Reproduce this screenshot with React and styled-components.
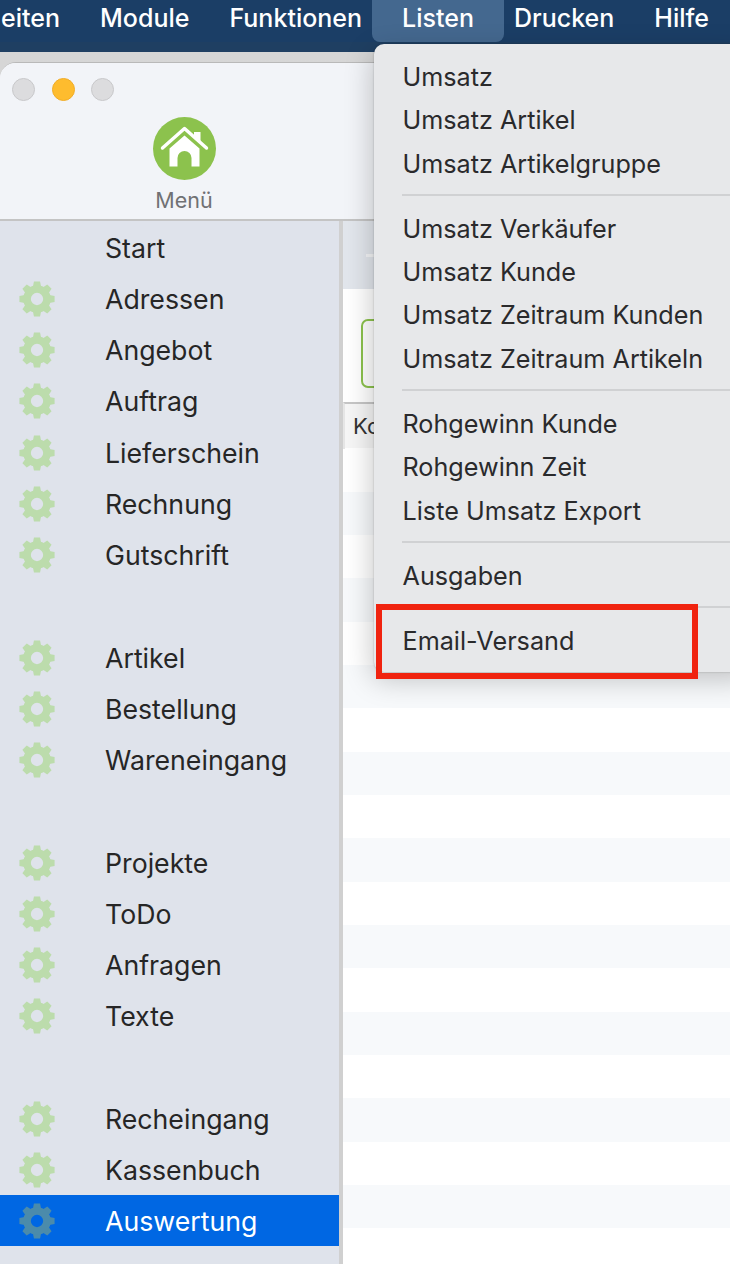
import React from 'react';
import styled, { createGlobalStyle } from 'styled-components';

const FONT = `Inter, "Noto Sans", "Liberation Sans", sans-serif`;

const sidebarItems = [
  { label: 'Start', noIcon: true },
  { label: 'Adressen' },
  { label: 'Angebot' },
  { label: 'Auftrag' },
  { label: 'Lieferschein' },
  { label: 'Rechnung' },
  { label: 'Gutschrift' },
  null,
  { label: 'Artikel' },
  { label: 'Bestellung' },
  { label: 'Wareneingang' },
  null,
  { label: 'Projekte' },
  { label: 'ToDo' },
  { label: 'Anfragen' },
  { label: 'Texte' },
  null,
  { label: 'Recheingang' },
  { label: 'Kassenbuch' },
  { label: 'Auswertung', active: true },
];

const menuGroups = [
  ['Umsatz', 'Umsatz Artikel', 'Umsatz Artikelgruppe'],
  ['Umsatz Verkäufer', 'Umsatz Kunde', 'Umsatz Zeitraum Kunden', 'Umsatz Zeitraum Artikeln'],
  ['Rohgewinn Kunde', 'Rohgewinn Zeit', 'Liste Umsatz Export'],
  ['Ausgaben'],
  ['Email-Versand'],
];

function Gear({ active }) {
  const teeth = [0, 45, 90, 135, 180, 225, 270, 315];
  return (
    <GearIcon viewBox="0 0 40 40" $active={active}>
      {teeth.map((a) => (
        <path key={a} d="M16.8 1.5h6.4l1.4 7h-9.2z" transform={`rotate(${a} 20 20)`} fill="currentColor" />
      ))}
      <circle cx="20" cy="20" r="10.5" fill="none" stroke="currentColor" strokeWidth="8" />
    </GearIcon>
  );
}

function HomeBadge() {
  return (
    <HomeIcon viewBox="0 0 63 63">
      <circle cx="31.5" cy="31.5" r="31.5" fill="#8cc24d" />
      <path d="M41 15h6.5v9.5L41 19z" fill="#fff" />
      <path d="M9.5 31 31.5 11.5 53.5 31" fill="none" stroke="#fff" strokeWidth="3.4" strokeLinecap="round" strokeLinejoin="round" />
      <path
        d="M31.5 18.5 46.5 31.5V49.5H38.5V41a7 7 0 0 0-14 0V49.5H16.5V31.5z"
        fill="#fff"
      />
    </HomeIcon>
  );
}

export default function App() {
  return (
    <>
      <GlobalStyle />
      <Screen>
        <MenuBar>
          <MenuTitle>eiten</MenuTitle>
          <MenuTitle>Module</MenuTitle>
          <MenuTitle>Funktionen</MenuTitle>
          <MenuTitle $open>Listen</MenuTitle>
          <MenuTitle>Drucken</MenuTitle>
          <MenuTitle>Hilfe</MenuTitle>
        </MenuBar>
        <Desktop>
          <Window>
            <Toolbar>
              <TrafficLights>
                <Light />
                <Light $color="#febc2e" />
                <Light />
              </TrafficLights>
              <ToolButton>
                <HomeBadge />
                <ToolLabel>Menü</ToolLabel>
              </ToolButton>
            </Toolbar>
            <Body>
              <Sidebar>
                {sidebarItems.map((item, i) =>
                  item ? (
                    <SideRow key={item.label} $active={item.active}>
                      <IconSlot>{!item.noIcon && <Gear active={item.active} />}</IconSlot>
                      {item.label}
                    </SideRow>
                  ) : (
                    <SideRow key={i} />
                  )
                )}
              </Sidebar>
              <Content>
                <TabStrip>
                  <TabDash />
                </TabStrip>
                <ActionArea>
                  <GreenButton />
                </ActionArea>
                <TableHead>Ko</TableHead>
                {Array.from({ length: 19 }).map((_, i) => (
                  <TableRow key={i} $striped={i % 2 === 1} />
                ))}
              </Content>
            </Body>
          </Window>
        </Desktop>
        <Dropdown>
          {menuGroups.map((group, g) => (
            <React.Fragment key={g}>
              {g > 0 && <Separator />}
              {group.map((label) => (
                <DropItem key={label}>{label}</DropItem>
              ))}
            </React.Fragment>
          ))}
        </Dropdown>
        <Highlight />
      </Screen>
    </>
  );
}

const GlobalStyle = createGlobalStyle`
  html, body {
    margin: 0;
    padding: 0;
    background: #fff;
  }
  body {
    font-family: ${FONT};
    overflow: hidden;
  }
`;

const Screen = styled.div`
  position: relative;
  display: flex;
  flex-direction: column;
  width: 730px;
  height: 1264px;
  overflow: hidden;
`;

const MenuBar = styled.div`
  display: flex;
  align-items: flex-start;
  flex-shrink: 0;
  height: 52px;
  padding-right: 1px;
  justify-content: flex-end;
  box-sizing: border-box;
  background: linear-gradient(to bottom, #1b3e66 0, #1b3e66 42px, #1f3f62 42px, #1f3f62 100%);
`;

const MenuTitle = styled.div`
  flex-shrink: 0;
  height: 42px;
  line-height: 36px;
  padding: 0 ${(p) => (p.$open ? '30px' : '20px')};
  margin: 0 ${(p) => (p.$open ? '-10px' : '0')};
  border-radius: 0 0 8px 8px;
  font-size: 25px;
  font-weight: 500;
  color: #fff;
  background: ${(p) => (p.$open ? '#44688f' : 'transparent')};
`;

const Desktop = styled.div`
  flex: 1;
  min-height: 0;
  display: flex;
  padding-top: 10px;
  background: linear-gradient(to bottom, #d6d6d6, #dcdcdc);
`;

const Window = styled.div`
  flex: 1;
  display: flex;
  flex-direction: column;
  border-top: 1px solid #b9b9b9;
  border-radius: 16px 0 0 0;
  overflow: hidden;
  background: #f2f4f8;
`;

const Toolbar = styled.div`
  position: relative;
  flex-shrink: 0;
  height: 158px;
  box-sizing: border-box;
  border-bottom: 2px solid #c4c4c4;
  display: flex;
  flex-direction: column;
  align-items: flex-start;
  background: #f2f4f8;
`;

const TrafficLights = styled.div`
  display: flex;
  gap: 16.5px;
  padding: 15px 0 0 12px;
`;

const Light = styled.span`
  width: 23px;
  height: 23px;
  box-sizing: border-box;
  border-radius: 50%;
  background: ${(p) => p.$color || '#dcdcde'};
  border: 1px solid ${(p) => (p.$color ? '#f0ac28' : '#c8c8ca')};
`;

const ToolButton = styled.div`
  display: flex;
  flex-direction: column;
  align-items: center;
  width: 120px;
  margin: 16px 0 0 124px;
`;

const HomeIcon = styled.svg`
  width: 63px;
  height: 63px;
  display: block;
`;

const ToolLabel = styled.span`
  margin-top: 8px;
  font-size: 21.5px;
  line-height: 24px;
  color: #707174;
`;

const Body = styled.div`
  flex: 1;
  min-height: 0;
  display: flex;
`;

const Sidebar = styled.div`
  flex-shrink: 0;
  width: 343px;
  box-sizing: border-box;
  background: #dfe3eb;
  border-right: 4px solid #d0d0d0;
`;

const SideRow = styled.div`
  display: flex;
  align-items: center;
  height: 51.25px;
  box-sizing: border-box;
  padding-top: 2px;
  font-size: 26.7px;
  color: ${(p) => (p.$active ? '#fff' : '#262626')};
  background: ${(p) => (p.$active ? '#0067e3' : 'transparent')};
`;

const IconSlot = styled.span`
  display: flex;
  justify-content: center;
  align-items: center;
  flex-shrink: 0;
  width: 74px;
  margin-right: 31px;
`;

const GearIcon = styled.svg`
  display: block;
  width: 38px;
  height: 38px;
  color: ${(p) => (p.$active ? '#4b8bab' : '#bcdcac')};
`;

const Content = styled.div`
  flex: 1;
  min-width: 0;
  background: #fff;
`;

const TabStrip = styled.div`
  display: flex;
  align-items: center;
  height: 68px;
  padding-left: 23px;
  background: #e2e6ec;
`;

const TabDash = styled.span`
  width: 8px;
  height: 3px;
  background: #f4f5f7;
`;

const ActionArea = styled.div`
  height: 113px;
  box-sizing: border-box;
  padding: 30px 0 0 18px;
  background: #fff;
`;

const GreenButton = styled.div`
  width: 120px;
  height: 69px;
  box-sizing: border-box;
  border: 2px solid #8cc24d;
  border-radius: 7px;
`;

const TableHead = styled.div`
  height: 46.5px;
  box-sizing: border-box;
  padding-left: 8px;
  line-height: 44px;
  font-size: 22px;
  color: #333;
  background: linear-gradient(to bottom, #f6f6f6 44px, #fff 44px);
  border-top: 2px solid #c6c6c6;
  border-left: 2px solid #e6e6e6;
`;

const TableRow = styled.div`
  height: 43.33px;
  background: ${(p) => (p.$striped ? '#f7f9fb' : '#fff')};
`;

const Dropdown = styled.div`
  position: absolute;
  top: 44px;
  left: 374px;
  width: 380px;
  height: 628px;
  box-sizing: border-box;
  padding: 12px 0 0 0;
  background: #e7e8ea;
  border-radius: 10px;
  box-shadow: 0 0 2px rgba(0, 0, 0, 0.25), -2px 8px 28px rgba(0, 0, 0, 0.22);
`;

const DropItem = styled.div`
  height: 43.3px;
  line-height: 42px;
  padding-left: 28.5px;
  font-size: 25.2px;
  color: #2a2a2c;
`;

const Separator = styled.div`
  height: 2px;
  margin: 8px 0 12px 28px;
  background: #d0d1d3;
`;

const Highlight = styled.div`
  position: absolute;
  top: 604px;
  left: 376px;
  width: 322px;
  height: 75px;
  box-sizing: border-box;
  border: 6px solid #f0230f;
`;
